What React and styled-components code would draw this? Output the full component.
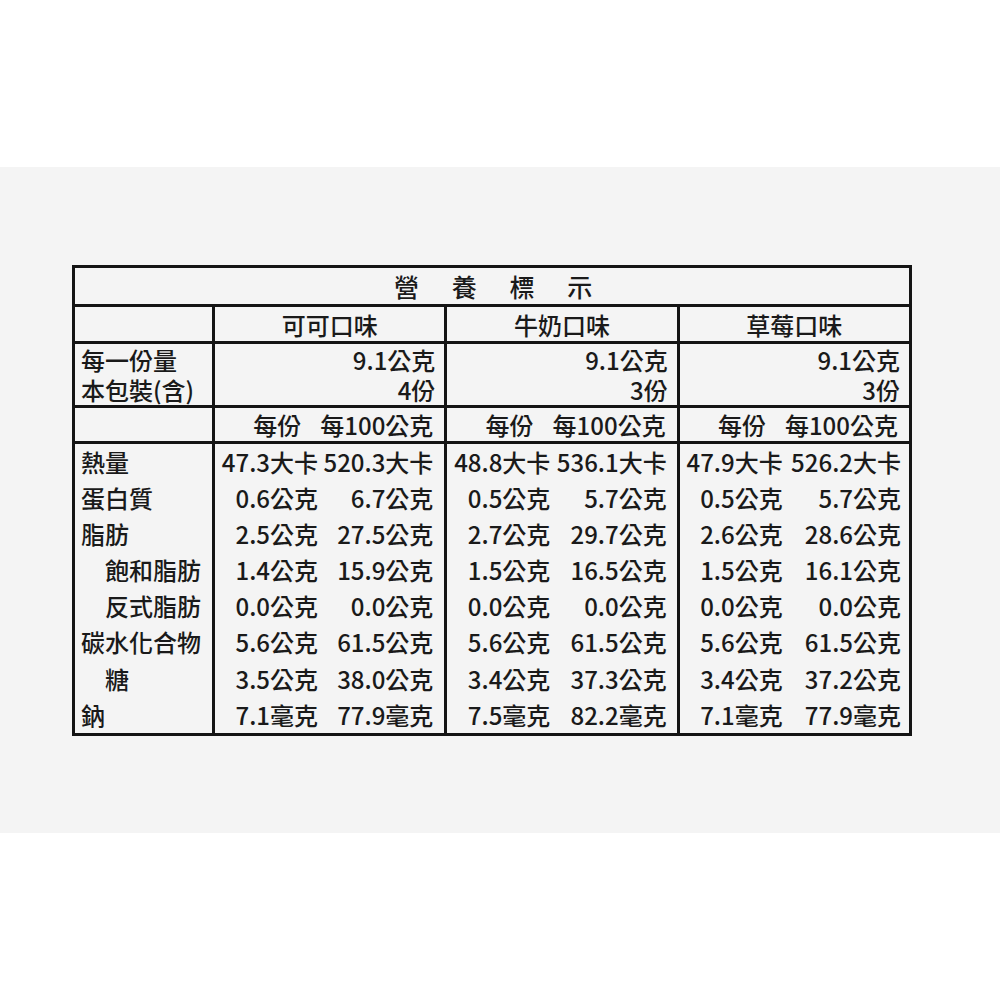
import styled, { createGlobalStyle } from 'styled-components'

const GlobalStyle = createGlobalStyle`
  html, body {
    margin: 0;
    padding: 0;
    background: #ffffff;
  }
  body {
    font-family: "Noto Sans CJK TC", "Noto Sans", sans-serif;
    font-weight: 500;
    color: #1a1a1a;
  }
`

const Band = styled.div`
  margin-top: 167px;
  height: 666px;
  box-sizing: border-box;
  background: #f4f4f4;
  padding: 98px 0 0 72px;
`

const Table = styled.div`
  width: 840px;
  box-sizing: border-box;
  display: grid;
  grid-template-columns: 137px 1fr 1fr 1fr;
  grid-template-rows: 36px 34px 61px 33px 289px;
  gap: 3px;
  padding: 3px;
  background: #141414;
`

const Cell = styled.div`
  background: #f4f4f4;
  font-size: 24px;
  display: flex;
  align-items: center;
  justify-content: ${(p) => p.$align || 'flex-start'};
  padding: ${(p) => p.$pad || '0 6px'};
  white-space: nowrap;
  min-width: 0;
`

const TitleCell = styled(Cell)`
  grid-column: 1 / -1;
  justify-content: center;
  font-size: 25px;
  letter-spacing: 32.7px;
  padding-left: 41px;
`

const Stack = styled.div`
  display: flex;
  flex-direction: column;
  align-items: ${(p) => p.$align || 'flex-start'};
  line-height: 30px;
`

const PerLine = styled.div`
  display: flex;
  gap: 19px;
  line-height: 30px;
`

const Lines = styled.div`
  align-self: stretch;
  display: flex;
  flex-direction: column;
`

const Label = styled.div`
  height: 36.1px;
  line-height: 36.1px;
  padding-left: ${(p) => (p.$indent ? '24px' : '0')};
`

const ValueGrid = styled.div`
  align-self: stretch;
  width: 100%;
  display: grid;
  grid-template-columns: 103px 1fr;
  grid-auto-rows: 36.1px;
  padding-right: ${(p) => p.$right || '11px'};
  box-sizing: border-box;
`

const Value = styled.div`
  text-align: right;
  line-height: 36.1px;
`

const flavors = [
  {
    name: '可可口味',
    servings: '4份',
    right: '11px',
    values: [
      ['47.3大卡', '520.3大卡'],
      ['0.6公克', '6.7公克'],
      ['2.5公克', '27.5公克'],
      ['1.4公克', '15.9公克'],
      ['0.0公克', '0.0公克'],
      ['5.6公克', '61.5公克'],
      ['3.5公克', '38.0公克'],
      ['7.1毫克', '77.9毫克'],
    ],
  },
  {
    name: '牛奶口味',
    servings: '3份',
    right: '10px',
    values: [
      ['48.8大卡', '536.1大卡'],
      ['0.5公克', '5.7公克'],
      ['2.7公克', '29.7公克'],
      ['1.5公克', '16.5公克'],
      ['0.0公克', '0.0公克'],
      ['5.6公克', '61.5公克'],
      ['3.4公克', '37.3公克'],
      ['7.5毫克', '82.2毫克'],
    ],
  },
  {
    name: '草莓口味',
    servings: '3份',
    right: '8px',
    values: [
      ['47.9大卡', '526.2大卡'],
      ['0.5公克', '5.7公克'],
      ['2.6公克', '28.6公克'],
      ['1.5公克', '16.1公克'],
      ['0.0公克', '0.0公克'],
      ['5.6公克', '61.5公克'],
      ['3.4公克', '37.2公克'],
      ['7.1毫克', '77.9毫克'],
    ],
  },
]

const labels = [
  ['熱量', false],
  ['蛋白質', false],
  ['脂肪', false],
  ['飽和脂肪', true],
  ['反式脂肪', true],
  ['碳水化合物', false],
  ['糖', true],
  ['鈉', false],
]

export default function App() {
  return (
    <>
      <GlobalStyle />
      <Band>
        <Table>
          <TitleCell>營養標示</TitleCell>

          {/* 口味 */}
          <Cell />
          {flavors.map((f) => (
            <Cell key={f.name} $align="center" $pad="0">
              {f.name}
            </Cell>
          ))}

          {/* 份量 */}
          <Cell>
            <Stack>
              <span>每一份量</span>
              <span>本包裝(含)</span>
            </Stack>
          </Cell>
          {flavors.map((f) => (
            <Cell key={f.name} $align="flex-end" $pad="0 9px 0 6px">
              <Stack $align="flex-end">
                <span>9.1公克</span>
                <span>{f.servings}</span>
              </Stack>
            </Cell>
          ))}

          <Cell />
          {flavors.map((f) => (
            <Cell key={f.name} $align="flex-end" $pad="0 11px 0 6px">
              <PerLine>
                <span>每份</span>
                <span>每100公克</span>
              </PerLine>
            </Cell>
          ))}

          {/* 營養素 */}
          <Cell $pad="0 0 0 6px">
            <Lines>
              {labels.map(([text, indent]) => (
                <Label key={text} $indent={indent}>
                  {text}
                </Label>
              ))}
            </Lines>
          </Cell>
          {flavors.map((f) => (
            <Cell key={f.name} $pad="0">
              <ValueGrid $right={f.right}>
                {f.values.flatMap(([a, b], i) => [
                  <Value key={'a' + i}>{a}</Value>,
                  <Value key={'b' + i}>{b}</Value>,
                ])}
              </ValueGrid>
            </Cell>
          ))}
        </Table>
      </Band>
    </>
  )
}
